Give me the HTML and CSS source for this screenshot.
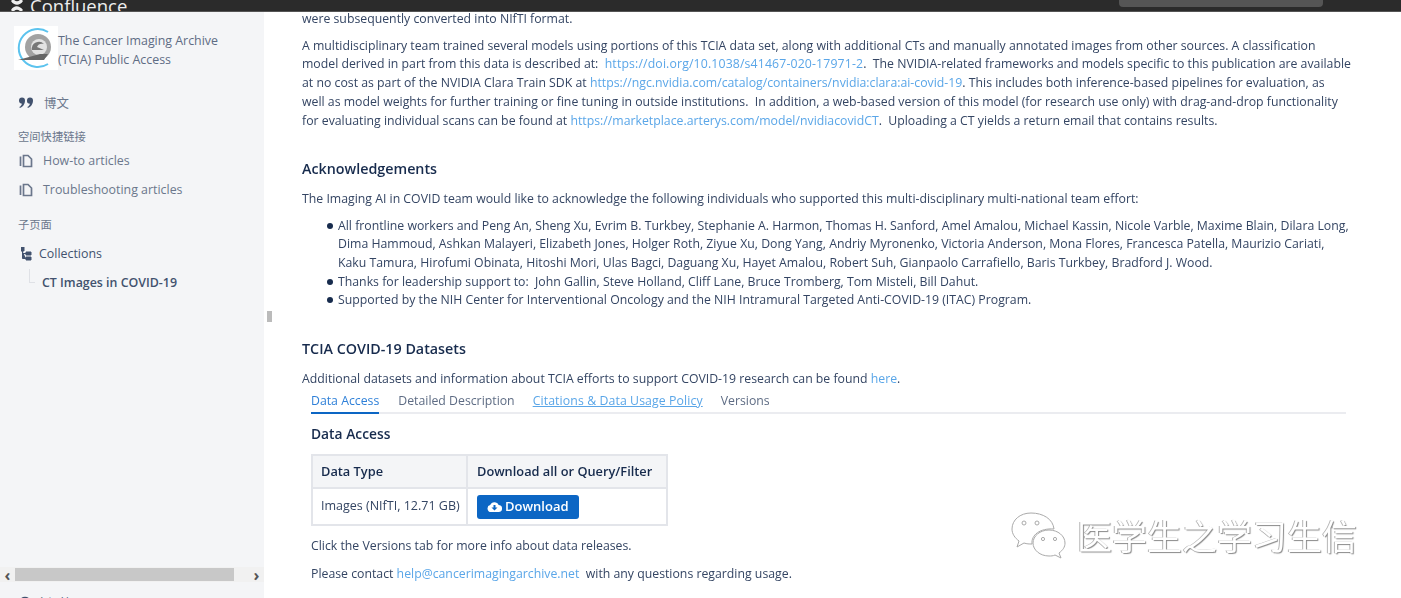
FILE: index.html
```html
<!DOCTYPE html>
<html lang="en">

<head>
    <meta charset="UTF-8">
    <title>CT Images in COVID-19</title>
    <link rel="stylesheet" href="styles.css">
</head>

<body>
    <header class="topbar">
        <div class="brand">
            <svg class="brand-icon" width="14" height="14" viewBox="0 0 14 14"><path d="M1 11c3-5 8-5 12 0l-2 2c-3-3-5-3-8 0zM1 2l2-2c3 3 5 3 8 0l2 2c-3 5-9 5-12 0z" fill="#eee"/></svg>
            <span>Confluence</span>
        </div>
        <div class="search-box"></div>
    </header>

    <div class="layout">
        <aside class="sidebar">
            <div class="space-head">
                <svg class="space-logo" width="44" height="44" viewBox="0 0 44 44">
                    <rect width="44" height="44" fill="#fff"/>
                    <path d="M34 6A19 19 0 1 0 34 38" fill="none" stroke="#5cc3ee" stroke-width="2"/>
                    <circle cx="24" cy="21" r="13" fill="#a2a2a2"/>
                    <circle cx="25" cy="21" r="8" fill="#e2e2e2"/>
                    <path d="M18 24a7 7 0 0 1 12-6c-3-1-6 0-7 3l7 3z" fill="#777"/>
                    <path d="M4 34l22-6h8l-4 6z" fill="#666"/>
                </svg>
                <div class="space-name">The Cancer Imaging Archive<br>(TCIA) Public Access</div>
            </div>

            <a class="nav-item blog-item">
                <svg width="15" height="12" viewBox="0 0 15 12"><path d="M0 3.500a3 3 0 1 1 6 0c0 4-2.500 6.500-5 7.500l-.7-1c1.500-.8 2.400-1.900 2.600-3.300A3 3 0 0 1 0 3.500zM8 3.500a3 3 0 1 1 6 0c0 4-2.500 6.500-5 7.500l-.7-1c1.500-.8 2.400-1.900 2.600-3.300A3 3 0 0 1 8 3.500z" fill="#42526e"/></svg>
                <span>博文</span>
            </a>

            <div class="nav-title shortcut-title">空间快捷链接</div>
            <a class="nav-item">
                <svg width="14" height="14" viewBox="0 0 14 14"><path d="M4.500 1.500h4.500l3.500 3.500v7.500H4.500zM1.500 2.500v9.500" fill="none" stroke="#6b778c" stroke-width="1.700"/></svg>
                <span>How-to articles</span>
            </a>
            <a class="nav-item">
                <svg width="14" height="14" viewBox="0 0 14 14"><path d="M4.500 1.500h4.500l3.500 3.500v7.500H4.500zM1.500 2.500v9.500" fill="none" stroke="#6b778c" stroke-width="1.700"/></svg>
                <span>Troubleshooting articles</span>
            </a>

            <div class="nav-title pages-title">子页面</div>
            <a class="tree-root">
                <svg width="11" height="14" viewBox="0 0 11 14"><path d="M0 0h3v4H0zM5 5h5v3H5zM5 10h5v3H5zM1.500 4v7.500H5M1.500 6.500H5" fill="#42526e" stroke="#42526e"/></svg>
                <span>Collections</span>
            </a>
            <a class="tree-child">CT Images in COVID-19</a>

            <div class="scrollbar">
                <span class="arrow">&#8249;</span>
                <div class="track"><div class="thumb"></div></div>
                <span class="arrow">&#8250;</span>
            </div>
            <div class="space-tools">
                <svg width="14" height="14" viewBox="0 0 14 14"><circle cx="7" cy="7" r="5" fill="none" stroke="#42526e" stroke-width="2.500"/></svg>
                <span>空间管理</span>
            </div>
        </aside>

        <div class="splitter"><span class="grip"></span></div>

        <main class="content">
            <p class="line-first">were subsequently converted into NIfTI format.</p>
            <p class="para">A multidisciplinary team trained several models using portions of this TCIA data set, along with additional CTs and manually annotated images from other sources. A classification<br>model derived in part from this data is described at:&nbsp; <a class="doi-link" href="#">https://doi.org/10.1038/s41467-020-17971-2</a>.&nbsp; The NVIDIA-related frameworks and models specific to this publication are available<br>at no cost as part of the NVIDIA Clara Train SDK at <a href="#">https://ngc.nvidia.com/catalog/containers/nvidia:clara:ai-covid-19</a>. This includes both inference-based pipelines for evaluation, as<br>well as model weights for further training or fine tuning in outside institutions.&nbsp; In addition, a web-based version of this model (for research use only) with drag-and-drop functionality<br>for evaluating individual scans can be found at <a href="#">https://marketplace.arterys.com/model/nvidiacovidCT</a>.&nbsp; Uploading a CT yields a return email that contains results.</p>

            <h2 class="ack-title">Acknowledgements</h2>
            <p class="ack-intro">The Imaging AI in COVID team would like to acknowledge the following individuals who supported this multi-disciplinary multi-national team effort:</p>
            <ul class="ack-list">
                <li>All frontline workers and Peng An, Sheng Xu, Evrim B. Turkbey, Stephanie A. Harmon, Thomas H. Sanford, Amel Amalou, Michael Kassin, Nicole Varble, Maxime Blain, Dilara Long,<br>Dima Hammoud, Ashkan Malayeri, Elizabeth Jones, Holger Roth, Ziyue Xu, Dong Yang, Andriy Myronenko, Victoria Anderson, Mona Flores, Francesca Patella, Maurizio Cariati,<br>Kaku Tamura, Hirofumi Obinata, Hitoshi Mori, Ulas Bagci, Daguang Xu, Hayet Amalou, Robert Suh, Gianpaolo Carrafiello, Baris Turkbey, Bradford J. Wood.</li>
                <li>Thanks for leadership support to:&nbsp; John Gallin, Steve Holland, Cliff Lane, Bruce Tromberg, Tom Misteli, Bill Dahut.</li>
                <li>Supported by the NIH Center for Interventional Oncology and the NIH Intramural Targeted Anti-COVID-19 (ITAC) Program.</li>
            </ul>

            <h2 class="datasets-title">TCIA COVID-19 Datasets</h2>
            <p class="datasets-intro">Additional datasets and information about TCIA efforts to support COVID-19 research can be found <a href="#">here</a>.</p>

            <div class="tabs">
                <a class="tab active">Data Access</a>
                <a class="tab">Detailed Description</a>
                <a class="tab link">Citations &amp; Data Usage Policy</a>
                <a class="tab">Versions</a>
            </div>

            <div class="tab-body">
                <h3>Data Access</h3>
                <table class="data-table">
                    <tr>
                        <th class="col-type">Data Type</th>
                        <th class="col-download">Download all or Query/Filter</th>
                    </tr>
                    <tr>
                        <td class="col-type">Images (NIfTI, 12.71 GB)</td>
                        <td>
                            <a class="download-btn">
                                <svg width="15" height="11" viewBox="0 0 15 11"><path d="M4 11a3.500 3.500 0 0 1-.8-6.900A4.500 4.500 0 0 1 11.600 4 3.500 3.500 0 0 1 11.500 11zM7.500 9.500l3-3H8.500V4h-2v2.500H4.500z" fill="#fff" fill-rule="evenodd"/></svg>
                                Download
                            </a>
                        </td>
                    </tr>
                </table>
                <p class="note-one">Click the Versions tab for more info about data releases.</p>
                <p class="note-two">Please contact <a href="#">help@cancerimagingarchive.net</a>&nbsp; with any questions regarding usage.</p>
            </div>
        </main>
    </div>

    <div class="watermark">
        <svg width="58" height="50" viewBox="0 0 58 50">
            <g fill="#fff" stroke="#a9a9a9" stroke-width="1">
                <path d="M21 3C10 3 2 10 2 19c0 5 3 9 7 12l-2 6 7-4c3 1 5 1 8 1-1-9 8-16 22-15C43 9 33 3 21 3z"/>
                <path d="M39 20c-9 0-16 6-16 13s7 13 16 13c2 0 4 0 6-1l6 3-2-5c4-3 6-6 6-10 0-7-7-13-16-13z"/>
            </g>
            <g fill="#fff" stroke="#aaa"><circle cx="14" cy="13" r="2"/><circle cx="27" cy="13" r="2"/><circle cx="33" cy="29" r="1.600"/><circle cx="45" cy="29" r="1.600"/></g>
        </svg>
        <span>医学生之学习生信</span>
    </div>
</body>

</html>
```

FILE: styles.css
```css
html,
body {
    height: 100%;
}

body {
    font-family: "Open Sans", "Noto Sans CJK SC", sans-serif;
    font-size: 12px;
    background-color: #fff;
    color: #172b4d;
    margin: 0;
    padding: 0;
    overflow: hidden;
    filter: blur(0.45px);
}

a {
    color: #5aa6e8;
    text-decoration: none;
}

.topbar {
    height: 11px;
    background-color: #2b2b2b;
    border-bottom: 1px solid #555;
    display: flex;
    justify-content: space-between;
    overflow: hidden;
}

.brand {
    display: flex;
    align-items: center;
    gap: 6px;
    padding-left: 10px;
    height: 11px;
    color: #eee;
    font-size: 18.500px;
}

.brand-icon {
    flex: none;
}

.search-box {
    width: 204px;
    height: 7px;
    margin-right: 78px;
    background-color: #555;
    border-radius: 0 0 4px 4px;
}

.layout {
    display: flex;
    height: 586px;
}

.sidebar {
    width: 264px;
    flex: none;
    background-color: #f4f5f7;
    color: #42526e;
    display: flex;
    flex-direction: column;
    overflow: hidden;
}

.sidebar > * {
    flex: none;
}

.space-head {
    display: flex;
    align-items: center;
    padding: 14px 0 0 14px;
    font-size: 12.400px;
    line-height: 19px;
    color: #5e6c84;
}

.space-name {
    white-space: nowrap;
    padding-top: 3px;
}

.nav-item {
    display: flex;
    align-items: center;
    gap: 10px;
    height: 29px;
    padding-left: 19px;
    color: #6b778c;
    font-size: 12.400px;
}

.blog-item {
    margin-top: 18px;
}

.nav-title {
    padding-left: 18px;
    font-size: 11.300px;
    line-height: 14px;
    color: #6b778c;
}

.shortcut-title {
    margin-top: 13px;
    margin-bottom: 2px;
}

.pages-title {
    margin-top: 14px;
}

.tree-root {
    display: flex;
    align-items: center;
    gap: 7px;
    height: 29px;
    margin-top: 7px;
    padding-left: 21px;
    color: #42526e;
    font-size: 12.400px;
}

.tree-child {
    position: relative;
    padding-left: 42px;
    height: 29px;
    line-height: 29px;
    color: #42526e;
    font-size: 12.400px;
    font-weight: 600;
}

.tree-child::before {
    content: "";
    position: absolute;
    left: 29px;
    top: 1px;
    width: 5px;
    height: 13px;
    border-left: 1px solid #dfe1e6;
    border-bottom: 1px solid #dfe1e6;
}

.scrollbar {
    display: flex;
    align-items: center;
    height: 15px;
    margin-top: 270px;
    color: #555;
    background-color: #f1f1f1;
    font-size: 16px;
    font-weight: 700;
}

.arrow {
    width: 15px;
    text-align: center;
}

.track {
    flex: 1;
    padding-right: 15px;
}

.thumb {
    height: 13px;
    background-color: #c8c8c8;
}

.space-tools {
    display: flex;
    align-items: center;
    gap: 4px;
    padding: 12px 0 0 18px;
    font-size: 12px;
}

.splitter {
    width: 10px;
    flex: none;
    display: flex;
    align-items: center;
    justify-content: center;
    padding-top: 22px;
}

.grip {
    width: 5px;
    height: 11px;
    background-color: #bbb;
}

.content {
    flex: 1;
    padding-left: 28px;
    line-height: 18.700px;
    font-size: 12.290px;
    color: #344563;
    white-space: nowrap;
    overflow: hidden;
}

.content p {
    margin: 0;
}

.content .line-first {
    margin-top: -2px;
}

.content .para {
    margin-top: 8px;
}

.doi-link {
    letter-spacing: 0.14px;
}

.content h2 {
    font-size: 14.300px;
    font-weight: 600;
    color: #172b4d;
    margin: 0;
}

.content .ack-title {
    margin-top: 30px;
}

.content .ack-intro {
    margin-top: 11px;
}

.ack-list {
    margin: 8px 0 0;
    padding-left: 36px;
    list-style: none;
}

.ack-list li {
    position: relative;
}

.ack-list li::before {
    content: "";
    position: absolute;
    left: -11px;
    top: 6px;
    width: 6px;
    height: 6px;
    border-radius: 50%;
    background-color: #172b4d;
}

.content .datasets-title {
    margin-top: 30px;
}

.content .datasets-intro {
    margin-top: 11px;
}

.tabs {
    display: flex;
    gap: 18px;
    margin-left: 9px;
    margin-right: 55px;
    border-bottom: 2px solid #ebecf0;
    height: 20px;
    padding-top: 3px;
}

.tab {
    color: #5e6c84;
}

.tab.active {
    color: #2f80d8;
    height: 20px;
    border-bottom: 2px solid #0c66c4;
    margin-right: 1px;
}

.tab.link {
    color: #5aa6e8;
    text-decoration: underline;
    letter-spacing: 0.1px;
}

.tab-body {
    padding-left: 9px;
}

.tab-body h3 {
    font-size: 13.800px;
    font-weight: 600;
    color: #172b4d;
    margin: 11px 0 11px;
}

.data-table {
    border-collapse: collapse;
}

.data-table th,
.data-table td {
    border: 2px solid #e3e5ea;
    padding: 0 9px;
    text-align: left;
}

.data-table .col-type {
    width: 140px;
    padding: 0 5px 0 8px;
}

.data-table th {
    height: 31px;
    background-color: #f4f5f7;
    color: #172b4d;
    font-size: 12.800px;
    font-weight: 600;
}

.col-download {
    width: 180px;
}

.data-table td {
    height: 35px;
    font-size: 12.500px;
}

.download-btn {
    display: inline-flex;
    align-items: center;
    gap: 3px;
    height: 24px;
    padding: 0 10px;
    background-color: #0c66c4;
    color: #fff;
    border-radius: 3px;
    font-size: 13px;
    font-weight: 600;
    vertical-align: middle;
}

.content .note-one {
    margin-top: 11px;
}

.content .note-two {
    margin-top: 9px;
}

.watermark {
    position: absolute;
    left: 1010px;
    top: 509px;
    display: flex;
    align-items: center;
    gap: 9px;
    font-family: "Noto Sans CJK SC", sans-serif;
    font-size: 35px;
    color: #fff;
    text-shadow: 1px 1px 1px #8a8a8a, -1px 0 0 #b5b5b5;
}
```
